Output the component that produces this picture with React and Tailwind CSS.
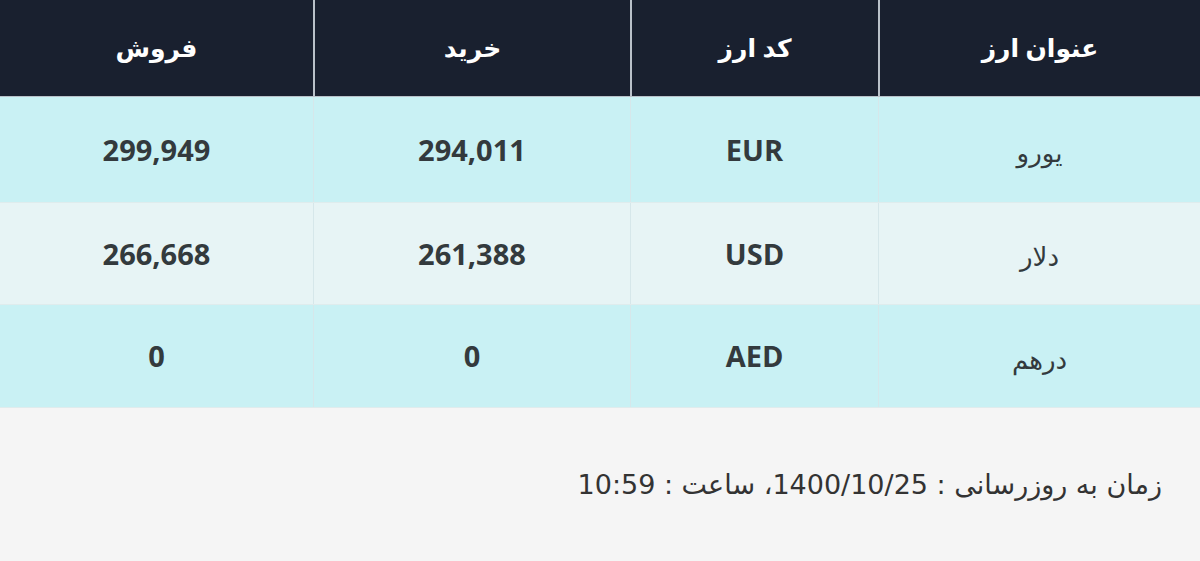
import React from "react";

const rows = [
  { name: "یورو", code: "EUR", buy: "294,011", sell: "299,949", bg: "bg-[#c9f1f4]", h: "h-[106px]" },
  { name: "دلار", code: "USD", buy: "261,388", sell: "266,668", bg: "bg-[#e7f4f5]", h: "h-[102px]" },
  { name: "درهم", code: "AED", buy: "0", sell: "0", bg: "bg-[#c9f1f4]", h: "h-[103px]" },
];

const font = { fontFamily: '"Open Sans", "DejaVu Sans", sans-serif' };

export default function App() {
  return (
    <div dir="rtl" className="w-[1200px] h-[561px] bg-[#f5f5f5] overflow-hidden" style={font}>
      <div className="grid grid-cols-[322px_248px_317px_313px] h-[97px] bg-[#19202f] border-b border-[#b9c1c9] text-white text-[25px] font-semibold">
        <div className="flex items-center justify-center border-l-2 border-[#b9c1c9]">عنوان ارز</div>
        <div className="flex items-center justify-center border-l-2 border-[#b9c1c9]">کد ارز</div>
        <div className="flex items-center justify-center border-l-2 border-[#b9c1c9]">خرید</div>
        <div className="flex items-center justify-center">فروش</div>
      </div>
      {rows.map((r) => (
        <div key={r.code} className={`grid grid-cols-[322px_248px_317px_313px] ${r.h} ${r.bg} border-b border-[#dfeced] text-[#333a3d]`}>
          <div className="flex items-center justify-center border-l border-[#d6e7ea] text-[26px] pt-[6px]">{r.name}</div>
          <div className="flex items-center justify-center border-l border-[#d6e7ea] text-[29px] font-bold" dir="ltr">{r.code}</div>
          <div className="flex items-center justify-center border-l border-[#d6e7ea] text-[29px] font-bold" dir="ltr">{r.buy}</div>
          <div className="flex items-center justify-center text-[29px] font-bold" dir="ltr">{r.sell}</div>
        </div>
      ))}
      <div
        className="pr-[38px] pt-[57px] text-[27px] text-[#333]"
        style={{ fontFamily: '"DejaVu Sans", sans-serif' }}
      >
        زمان به روزرسانی : 1400/10/25، ساعت : 10:59
      </div>
    </div>
  );
}
